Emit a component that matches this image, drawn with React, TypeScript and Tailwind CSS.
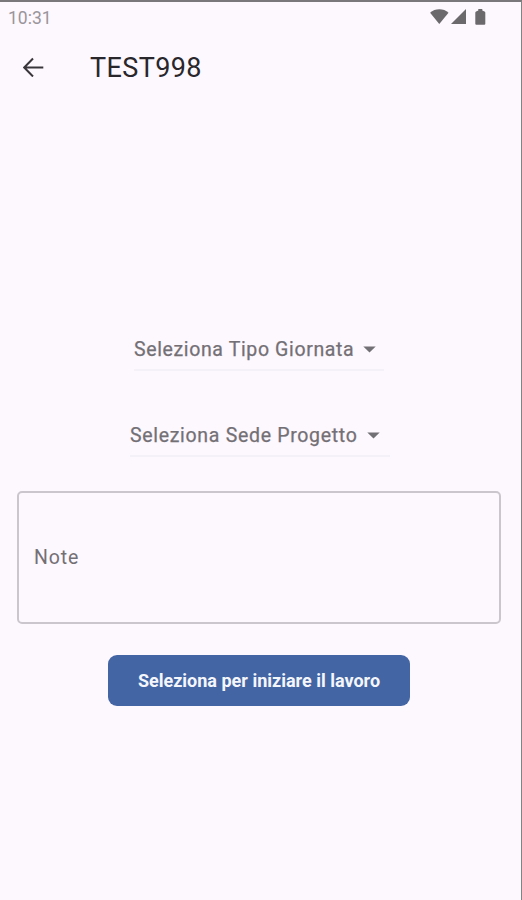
type DropdownProps = {
    label: string;
    className: string;
};

function StatusBar() {
    return (
        <div className="flex h-[30px] items-center justify-between pl-2 pr-[35px] text-[#99959b]">
            <span className="pt-[3px] text-[17.5px] leading-none">10:31</span>
            <div className="flex items-center text-[#6b696c]">
                <svg width="19" height="16" viewBox="0 0 19 16" fill="currentColor">
                    <path d="M0.1 3.8C5 -0.8 13.8 -0.8 18.5 3.8L9.3 15Z" />
                </svg>
                <svg className="ml-0.5" width="16" height="16" viewBox="0 0 16 16" fill="currentColor">
                    <path d="M15 0V15H0Z" />
                </svg>
                <svg className="ml-2" width="11" height="17" viewBox="0 0 11 17" fill="currentColor">
                    <path d="M3.3 0h4v1.5l2.2 1q0.8 0.4 0.8 1.2v11q0 1-1 1H1.3q-1 0-1-1V3.7q0-0.8 0.8-1.2l2.2-1z" />
                </svg>
            </div>
        </div>
    );
}

function Dropdown({ label, className }: DropdownProps) {
    return (
        <button className={`flex items-center border-b-2 border-[#f5f1f8] text-[#737075] ${className}`}>
            <span className="whitespace-nowrap pt-0.5 text-[19.5px] leading-6 [-webkit-text-stroke:0.25px]">{label}</span>
            <svg className="ml-[9px] mt-0.5" width="13" height="7" viewBox="0 0 13 7" fill="currentColor">
                <path d="M0.3 0.4h12.4L6.5 6.6z" />
            </svg>
        </button>
    );
}

function App() {
    return (
        <div className="flex h-[900px] w-[522px] flex-col border-r border-t-2 border-r-[#858286] border-t-[#7b787c] bg-[#fdf7fe] font-[Roboto,sans-serif]">
            <StatusBar />

            <header className="flex h-[70px] items-center pl-[23px]">
                <button aria-label="Indietro">
                    <svg width="21" height="20" viewBox="0 0 21 20" fill="none" stroke="#39363b" strokeWidth="2">
                        <path d="M20.3 10.5H2M10 1.5L1.2 10.5L10 19.5" />
                    </svg>
                </button>
                <h1 className="ml-[46px] pt-0.5 text-[27px] leading-8 tracking-[0.4px] text-[#29272b]">TEST998</h1>
            </header>

            <main className="flex flex-col pl-[17px] pr-5 pt-[226px]">
                <Dropdown label="Seleziona Tipo Giornata" className="ml-[117px] h-[43px] w-[250px] tracking-[0.63px]" />
                <Dropdown label="Seleziona Sede Progetto" className="ml-[113px] mt-[43px] h-[43px] w-[260px] tracking-[0.69px]" />

                <div className="mt-[34px] flex h-[133px] items-center rounded-[5px] border-2 border-[#cbc6ce] pl-[15px]">
                    <span className="text-[19.5px] leading-6 tracking-[0.9px] text-[#737075]">Note</span>
                </div>

                <button className="ml-[91px] mt-[31px] h-[51px] w-[302px] rounded-[9px] bg-[#4365a3] text-[18px] font-bold text-[#f4f6fb]">
                    Seleziona per iniziare il lavoro
                </button>
            </main>
        </div>
    );
}

export default App;
